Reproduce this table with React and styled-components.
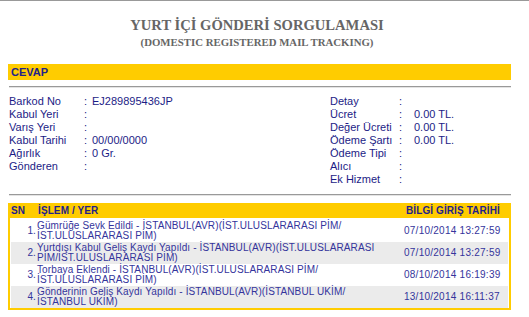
import React from "react";
import styled, { createGlobalStyle } from "styled-components";

const GlobalStyle = createGlobalStyle`
  html, body {
    margin: 0;
    padding: 0;
    background: #fff;
  }
  body {
    border-top: 1px solid #999;
    font-family: "Liberation Sans", Arial, sans-serif;
  }
`;

const Page = styled.div`
  width: 503px;
  margin-left: 8px;
`;

const Heading = styled.div`
  text-align: center;
  font-family: "Liberation Serif", "Times New Roman", serif;
  font-weight: bold;
  color: #666;
  padding-top: 15px;
  padding-right: 5px;
`;

const Title = styled.div`
  font-size: 14.6px;
  line-height: 18px;
`;

const SubTitle = styled.div`
  font-size: 10.8px;
  line-height: 15px;
  margin-top: 1px;
`;

const SectionBar = styled.div`
  margin-top: 14px;
  height: 16px;
  background: #ffcc00;
  color: #22228a;
  font-size: 11px;
  font-weight: bold;
  line-height: 16px;
  padding-left: 3px;
`;

const Rule = styled.div`
  margin: ${({ $top }) => $top}px 0 0 1px;
  width: 502px;
  border-top: 1px solid #999;
  border-bottom: 1px solid #e4e4e4;
`;

const InfoArea = styled.div`
  display: grid;
  grid-template-columns: 321px 1fr;
  padding: 7px 0 8px 1px;
`;

const InfoList = styled.div`
  display: grid;
  grid-template-columns: ${({ $label }) => $label}px ${({ $gap }) => $gap}px auto;
  grid-auto-rows: 13px;
  align-content: start;
  font-size: 11px;
  line-height: 13px;
  color: #1c1c86;
`;

const Cell = styled.span`
  white-space: nowrap;
`;

const Track = styled.div`
  margin-top: 7px;
  border: 2px solid #ffcc00;
  border-top: 0;
  background: #fff;
`;

const HeadRow = styled.div`
  display: grid;
  grid-template-columns: 27px 1fr 103px;
  height: 15px;
  background: #ffcc00;
  color: #1f1f8c;
  font-size: 10px;
  font-weight: bold;
  line-height: 15px;
  letter-spacing: 0.1px;
  padding-left: 1px;
`;

const Row = styled.div`
  display: grid;
  grid-template-columns: 26px 1fr 104px;
  align-items: center;
  height: 22px;
  margin: ${({ $first }) => ($first ? "2px 1px 0" : "0 1px")};
  background: ${({ $shade }) => ($shade ? "#ebebeb" : "#fff")};
  color: #34349c;
  font-size: 10px;
  letter-spacing: 0.12px;
`;

const Num = styled.span`
  text-align: right;
  padding-right: 1px;
  line-height: 10px;
`;

const Desc = styled.span`
  line-height: 10px;
  white-space: pre-line;
`;

const DateCell = styled.span`
  line-height: 10px;
  letter-spacing: 0.25px;
`;

const left = [
  ["Barkod No", "EJ289895436JP"],
  ["Kabul Yeri", ""],
  ["Varış Yeri", ""],
  ["Kabul Tarihi", "00/00/0000"],
  ["Ağırlık", "0 Gr."],
  ["Gönderen", ""],
];

const right = [
  ["Detay", ""],
  ["Ücret", "0.00 TL."],
  ["Değer Ücreti", "0.00 TL."],
  ["Ödeme Şartı", "0.00 TL."],
  ["Ödeme Tipi", ""],
  ["Alıcı", ""],
  ["Ek Hizmet", ""],
];

const moves = [
  {
    text: "Gümrüğe Sevk Edildi - İSTANBUL(AVR)(İST.ULUSLARARASI PİM/\nİST.ULUSLARARASI PİM)",
    date: "07/10/2014 13:27:59",
  },
  {
    text: "Yurtdışı Kabul Geliş Kaydı Yapıldı - İSTANBUL(AVR)(İST.ULUSLARARASI\nPİM/İST.ULUSLARARASI PİM)",
    date: "07/10/2014 13:27:59",
  },
  {
    text: "Torbaya Eklendi - İSTANBUL(AVR)(İST.ULUSLARARASI PİM/\nİST.ULUSLARARASI PİM)",
    date: "08/10/2014 16:19:39",
  },
  {
    text: "Gönderinin Geliş Kaydı Yapıldı - İSTANBUL(AVR)(İSTANBUL UKİM/\nİSTANBUL UKİM)",
    date: "13/10/2014 16:11:37",
  },
];

const renderList = (items, label, gap) => (
  <InfoList $label={label} $gap={gap}>
    {items.map(([k, v]) => (
      <React.Fragment key={k}>
        <Cell>{k}</Cell>
        <Cell>:</Cell>
        <Cell>{v}</Cell>
      </React.Fragment>
    ))}
  </InfoList>
);

const App = () => {
  return (
    <>
      <GlobalStyle />
      <Page>
        <Heading>
          <Title>YURT İÇİ GÖNDERİ SORGULAMASI</Title>
          <SubTitle>(DOMESTIC REGISTERED MAIL TRACKING)</SubTitle>
        </Heading>
        <SectionBar>CEVAP</SectionBar>
        <Rule $top={6} />
        <InfoArea>
          {renderList(left, 75, 8)}
          {renderList(right, 69, 15)}
        </InfoArea>
        <Rule $top={0} />
        <Track>
          <HeadRow>
            <span>SN</span>
            <span>İŞLEM / YER</span>
            <span>BİLGİ GİRİŞ TARİHİ</span>
          </HeadRow>
          {moves.map((m, i) => (
            <Row key={i} $first={i === 0} $shade={i % 2 === 1}>
              <Num>{i + 1}.</Num>
              <Desc>{m.text}</Desc>
              <DateCell>{m.date}</DateCell>
            </Row>
          ))}
        </Track>
      </Page>
    </>
  );
};

export default App;
